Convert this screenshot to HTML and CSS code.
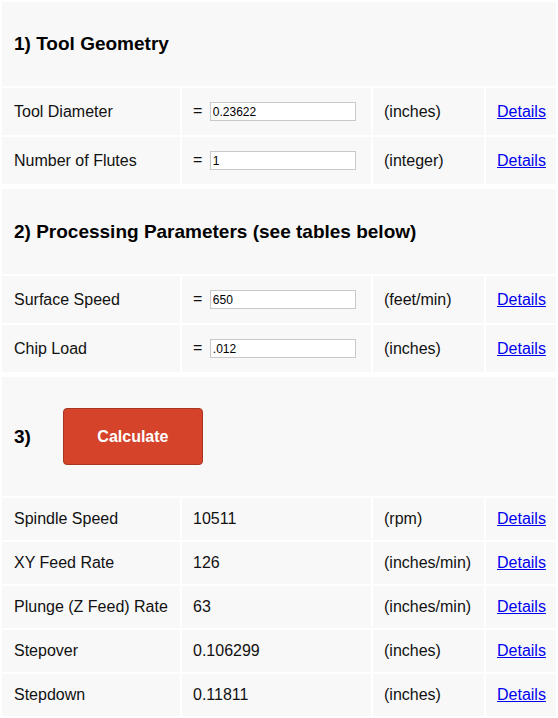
FILE: index.html
```html
<!DOCTYPE html>
<html lang="en">
<head>
<meta charset="utf-8">
<title>Feeds and Speeds Calculator</title>
<link rel="stylesheet" href="styles.css">
</head>
<body>
<table class="calc-table">
  <colgroup><col class="c-label"><col class="c-value"><col class="c-unit"><col class="c-link"></colgroup>
  <tr class="head-row"><td colspan="4" class="section-title">1) Tool Geometry</td></tr>
  <tr class="input-row">
    <td class="label">Tool Diameter</td>
    <td class="value">= <input class="field" type="text" value="0.23622"></td>
    <td class="unit">(inches)</td>
    <td class="link"><a href="#">Details</a></td>
  </tr>
  <tr class="input-row">
    <td class="label">Number of Flutes</td>
    <td class="value">= <input class="field" type="text" value="1"></td>
    <td class="unit">(integer)</td>
    <td class="link"><a href="#">Details</a></td>
  </tr>
</table>
<table class="calc-table">
  <colgroup><col class="c-label"><col class="c-value"><col class="c-unit"><col class="c-link"></colgroup>
  <tr class="head-row head-row-tall"><td colspan="4" class="section-title">2) Processing Parameters (see tables below)</td></tr>
  <tr class="input-row">
    <td class="label">Surface Speed</td>
    <td class="value">= <input class="field" type="text" value="650"></td>
    <td class="unit">(feet/min)</td>
    <td class="link"><a href="#">Details</a></td>
  </tr>
  <tr class="input-row">
    <td class="label">Chip Load</td>
    <td class="value">= <input class="field" type="text" value=".012"></td>
    <td class="unit">(inches)</td>
    <td class="link"><a href="#">Details</a></td>
  </tr>
</table>
<table class="calc-table">
  <colgroup><col class="c-label"><col class="c-value"><col class="c-unit"><col class="c-link"></colgroup>
  <tr class="action-row">
    <td colspan="4" class="section-title">
      <div class="step"><span class="step-num">3)</span><button class="calc-btn" type="button">Calculate</button></div>
    </td>
  </tr>
  <tr class="result-row">
    <td class="label">Spindle Speed</td>
    <td class="value">10511</td>
    <td class="unit">(rpm)</td>
    <td class="link"><a href="#">Details</a></td>
  </tr>
  <tr class="result-row">
    <td class="label">XY Feed Rate</td>
    <td class="value">126</td>
    <td class="unit">(inches/min)</td>
    <td class="link"><a href="#">Details</a></td>
  </tr>
  <tr class="result-row">
    <td class="label">Plunge (Z Feed) Rate</td>
    <td class="value">63</td>
    <td class="unit">(inches/min)</td>
    <td class="link"><a href="#">Details</a></td>
  </tr>
  <tr class="result-row">
    <td class="label">Stepover</td>
    <td class="value">0.106299</td>
    <td class="unit">(inches)</td>
    <td class="link"><a href="#">Details</a></td>
  </tr>
  <tr class="result-row">
    <td class="label">Stepdown</td>
    <td class="value">0.11811</td>
    <td class="unit">(inches)</td>
    <td class="link"><a href="#">Details</a></td>
  </tr>
</table>
</body>
</html>
```
FILE: styles.css
```css
html, body {
  margin: 0;
  padding: 0;
  background: #ffffff;
}
body {
  font-family: "Liberation Sans", Arial, Helvetica, sans-serif;
  font-size: 16px;
  line-height: 18px;
  color: #111111;
}
.calc-table {
  width: 558px;
  table-layout: fixed;
  border-collapse: separate;
  border-spacing: 2px;
  margin: 0 0 1px 0;
}
.c-label { width: 178px; }
.c-value { width: 189px; }
.c-unit { width: 111px; }
.c-link { width: 70px; }

.calc-table td {
  background: #f8f8f8;
  padding: 0 11px;
  vertical-align: middle;
  white-space: nowrap;
}
.calc-table td.label,
.calc-table td.section-title {
  padding-left: 12px;
}
.head-row { height: 84px; }
.head-row-tall { height: 85px; }
.input-row { height: 47px; }
.action-row { height: 119px; }
.result-row { height: 42px; }

.section-title {
  font-size: 19px;
  line-height: 22px;
  font-weight: bold;
  color: #000000;
}
.field {
  box-sizing: border-box;
  width: 146px;
  height: 19px;
  margin: 0 0 0 3px;
  padding: 0 2px;
  border: 1px solid #c9c9c9;
  background: #ffffff;
  font-family: "Liberation Sans", Arial, Helvetica, sans-serif;
  font-size: 12px;
  color: #000000;
  vertical-align: middle;
}
.link a {
  color: #0000ee;
  text-decoration: underline;
}
.step {
  display: flex;
  align-items: center;
  gap: 32px;
}
.calc-btn {
  box-sizing: border-box;
  width: 140px;
  height: 57px;
  background: #d5432a;
  border: 1px solid #a83520;
  border-radius: 4px;
  color: #ffffff;
  font-family: "Liberation Sans", Arial, Helvetica, sans-serif;
  font-size: 16px;
  font-weight: bold;
  padding: 0;
}
```
